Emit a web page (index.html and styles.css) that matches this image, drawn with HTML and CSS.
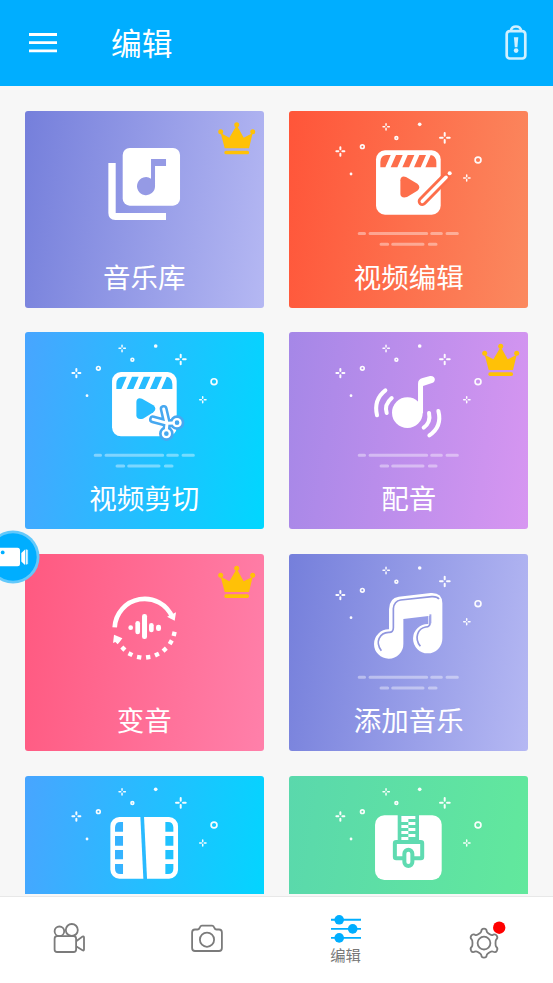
FILE: index.html
```html
<!DOCTYPE html>
<html lang="zh-CN">
<head>
<meta charset="utf-8">
<title>编辑</title>
<link rel="stylesheet" href="styles.css">
</head>
<body>
<svg class="defs" aria-hidden="true">
  <defs>
    <g id="sparks" fill="none" stroke="#fff" stroke-linecap="round" opacity=".96">
      <path stroke-width="6" d="M482 84v8M482 105v8M468 98h8M489 98h8M169 127v6M169 146v6M157 139h6M175 139h6"/>
      <path stroke-width="4.500" d="M306 56v5M306 70v5M297 65h5M311 65h5M548 210v5M548 223v5M539 219h5M553 219h5"/>
      <circle cx="235" cy="125" r="5.500" stroke-width="5"/>
      <circle cx="337" cy="99" r="4.200" stroke-width="5"/>
      <circle cx="582" cy="165" r="8.800" stroke-width="5"/>
      <circle cx="407" cy="58" r="5.500" fill="#fff" stroke="none"/>
      <circle cx="201" cy="207" r="4.200" fill="#fff" stroke="none"/>
    </g>
    <g id="dashes" stroke="#fff" stroke-width="9" stroke-linecap="round" opacity=".4">
      <path d="M225.500 385.500h16M258 385.500h170M443 385.500h29M489 385.500h31M291 418h20M326 418h91M436 418h20"/>
    </g>
    <g id="crown" fill="#ffc107">
      <circle cx="650" cy="59" r="7.500"/><circle cx="602" cy="80" r="7.500"/><circle cx="698" cy="80" r="7.500"/>
      <path d="M602 84L628 98L648 64h4L671 98L698 84L687 130H614Z"/>
      <rect x="613" y="137" width="74" height="11" rx="5"/>
    </g>
    <g id="clapper">
      <rect x="276" y="136" width="194" height="193" rx="27" fill="#fff"/>
      <path fill="currentColor" d="M289 187V171Q290 150 308 150H320L304 187ZM336 150H356L340 187H320ZM371 150H391L375 187H355ZM406 150H426L410 187H390ZM440 150Q457 153 457 173V187H424Z"/>
      <path fill="currentColor" d="M349 226Q350 211 366 216L400 236Q412 246 400 257L369 276Q350 281 349 266Z"/>
    </g>
  </defs>
</svg>
<div class="app">
  <header class="bar">
    <svg class="menu" viewBox="0 0 28 20"><path d="M0 1.500h28M0 9.700h28M0 17.900h28" stroke="#fff" stroke-width="2.800"/></svg>
    <h1>编辑</h1>
    <svg class="battery" viewBox="0 0 22 36" fill="none" stroke="#d0f0ff" stroke-width="2.700"><rect x="1.700" y="6.200" width="18.600" height="27.300" rx="3"/><path d="M6 6c0-6 10-6 10 0"/><path d="M8.900 12.200h4.400l-.9 10h-2.600z" fill="#d0f0ff" stroke="none"/><circle cx="11.100" cy="25.600" r="2.300" fill="#d0f0ff" stroke="none"/></svg>
  </header>

  <main class="grid">
    <section class="card indigo">
      <svg class="art" viewBox="15 18 718 591">
        <rect x="308" y="129" width="172" height="173" rx="21" fill="#fff"/>
        <path d="M393 162H438V183H405V243A27 27 0 1 1 393 221Z" fill="#959ae5"/>
        <path d="M265 174H287V324H438V345H286Q265 344 265 324Z" fill="#fff"/>
        <use href="#crown"/>
      </svg>
      <h2>音乐库</h2>
    </section>

    <section class="card orange">
      <svg class="art" viewBox="15 18 718 591">
        <use href="#sparks"/><use href="#dashes"/><use href="#clapper"/>
        <path d="M415 289L486 217" stroke="currentColor" stroke-width="28" stroke-linecap="round"/>
        <path d="M415 289L486 217" stroke="#fff" stroke-width="11" stroke-linecap="round"/>
        <circle cx="497" cy="205" r="6" fill="#fff"/>
      </svg>
      <h2>视频编辑</h2>
    </section>

    <section class="card blue">
      <svg class="art" viewBox="15 16 718 591">
        <use href="#sparks"/><use href="#dashes"/><use href="#clapper"/>
        <g fill="none" stroke-linecap="round">
          <path d="M431 247L441 290L439 321M399 278L443 290L471 288" stroke="#47a8f0" stroke-width="24"/>
          <circle cx="439" cy="321" r="13" stroke="#47a8f0" stroke-width="18"/><circle cx="471" cy="288" r="13" stroke="#47a8f0" stroke-width="18"/>
          <path d="M431 247L441 290L439 308M399 278L443 290L459 289" stroke="#fff" stroke-width="9"/>
          <circle cx="439" cy="321" r="10.500" stroke="#fff" stroke-width="7"/><circle cx="471" cy="288" r="10.500" stroke="#fff" stroke-width="7"/>
        </g>
      </svg>
      <h2>视频剪切</h2>
    </section>

    <section class="card purple">
      <svg class="art" viewBox="15 16 718 591">
        <use href="#sparks"/><use href="#dashes"/><use href="#crown"/>
        <circle cx="370" cy="258" r="46" fill="#fff"/>
        <path d="M402 260V171Q402 157 416 154L438 148C455 146 457 165 444 169L417 178V260Z" fill="#fff"/>
        <path d="M304 191Q268 219 279 266M323 214Q300 234 308 259M435 259Q441 287 419 303M463 253Q475 300 436 326" fill="none" stroke="#fff" stroke-width="12" stroke-linecap="round"/>
      </svg>
      <h2>配音</h2>
    </section>

    <section class="card pink">
      <svg class="art" viewBox="15 16 718 591">
        <path d="M284 236A90 90 0 0 1 457 206" fill="none" stroke="#fff" stroke-width="14"/>
        <path d="M468 191L464 216L441 204ZM282 258L307 269L301 277L293 287L286 280L279 283Z" fill="#fff"/>
        <g fill="#fff">
          <rect x="456" y="249" width="13" height="13" transform="rotate(13 462 255)"/>
          <rect x="446" y="274" width="13" height="13" transform="rotate(30 452 280)"/>
          <rect x="428" y="296" width="13" height="13" transform="rotate(48 434 302)"/>
          <rect x="405" y="311" width="13" height="13" transform="rotate(65 411 317)"/>
          <rect x="379" y="319" width="13" height="13" transform="rotate(82 385 325)"/>
          <rect x="351" y="319" width="13" height="13" transform="rotate(10 357 325)"/>
          <rect x="325" y="310" width="13" height="13" transform="rotate(26 331 316)"/>
          <rect x="304" y="293" width="13" height="13" transform="rotate(45 310 299)"/>
          <circle cx="332" cy="237" r="7"/>
          <rect x="346" y="217" width="14" height="40" rx="7"/><rect x="366" y="196" width="15" height="75" rx="7"/><rect x="387" y="223" width="14" height="28" rx="7"/><rect x="408" y="228" width="15" height="19" rx="7"/>
        </g>
        <use href="#crown"/>
      </svg>
      <h2>变音</h2>
    </section>

    <section class="card indigo">
      <svg class="art" viewBox="15 16 718 591">
        <use href="#sparks"/><use href="#dashes"/>
        <path d="M315 242V182Q316 147 344 144L440 133Q475 131 475 164V269A44 44 0 1 1 433 226V202L358 211V285A44 44 0 1 1 315 242Z" fill="#fff"/>
        <path d="M292 306C272 280 287 252 314 251Q328 252 328 237V180Q330 157 350 154L443 144Q459 143 465 151M409 293C389 267 402 239 425 235Q439 235 438 220V198" fill="none" stroke="#9096df" stroke-width="5"/>
        <path d="M433 202V194H450V228Q450 237 441 238V202Z" fill="#fff"/>
        <path d="M439 197V224" stroke="#a0a5e8" stroke-width="6"/>
      </svg>
      <h2>添加音乐</h2>
    </section>

    <section class="card blue">
      <svg class="art" viewBox="15 18 718 591">
        <use href="#sparks"/>
        <rect x="271" y="141" width="203" height="185" rx="27" fill="#fff"/>
        <path d="M361 140H372L381 327H370Z" fill="#29baff"/>
        <path fill="#35b3ff" d="M309 156V185H285V172Q286 156 301 156ZM285 198H309V227H285ZM285 240H309V268H285ZM285 282H309V312H301Q285 312 285 296Z"/>
        <path fill="#1fc2ff" d="M436 156V185H460V172Q459 156 444 156ZM436 198H460V227H436ZM436 240H460V268H436ZM436 282H460V296Q460 312 444 312H436Z"/>
      </svg>
    </section>

    <section class="card green">
      <svg class="art" viewBox="15 18 718 591">
        <use href="#sparks"/>
        <rect x="273" y="136" width="200" height="194" rx="28" fill="#fff"/>
        <path d="M341 135H405V211H341Z" fill="currentColor"/>
        <path d="M352 138H373V156H352ZM352 165H373V174H352ZM352 183H373V192H352ZM352 201H373V210H352ZM373 138H394V147H373ZM373 156H394V165H373ZM373 174H394V183H373ZM373 192H394V201H373Z" fill="#fff"/>
        <rect x="332.500" y="216" width="82" height="49" rx="4" fill="#fff" stroke="currentColor" stroke-width="12"/>
        <rect x="361" y="239" width="24" height="49" rx="12" fill="#fff" stroke="currentColor" stroke-width="12"/>
      </svg>
    </section>
  </main>

  <nav class="tabs">
    <a class="tab"><svg class="icon" viewBox="0 0 36 36" fill="none" stroke="#7b7b7b" stroke-width="1.800"><circle cx="8.400" cy="12.300" r="4.800"/><circle cx="20.800" cy="11" r="6"/><rect x="3.600" y="17.200" width="21.500" height="15.800" rx="2.500"/><path d="M25.500 22L31.500 17.500Q33 17 33 18.500V30.500Q33 32 31.500 31.200L25.500 27.500"/></svg></a>
    <a class="tab"><svg class="icon" viewBox="0 0 36 36" fill="none" stroke="#7b7b7b" stroke-width="1.800"><path d="M6 10.500H8.500Q10 10.500 10.600 8.900Q11.300 6.700 12.800 6.700H23.200Q24.700 6.700 25.400 8.900Q26 10.500 27.500 10.500H30Q32.900 10.500 32.900 13.400V29Q32.900 32 30 32H6Q3.100 32 3.100 29V13.400Q3.100 10.500 6 10.500Z"/><circle cx="18" cy="20.700" r="7.100"/></svg></a>
    <a class="tab active"><svg class="sliders" viewBox="0 0 30 28"><path d="M0 4.800h30M0 13.900h30M0 22.900h30" stroke="#00aeff" stroke-width="1.900"/><g fill="#00aeff"><circle cx="8.200" cy="4.800" r="4.800"/><circle cx="21.700" cy="13.900" r="4.800"/><circle cx="8.200" cy="22.900" r="4.800"/></g></svg><span>编辑</span></a>
    <a class="tab"><svg class="gear" viewBox="0 0 44 44" fill="none" stroke="#7b7b7b" stroke-width="1.800" stroke-linejoin="round"><path d="M19.300 11.200Q19.300 8.600 22 8.600Q24.700 8.600 24.700 11.200Q24.800 12.500 28.200 14.500Q29.800 15.600 31.200 14.700Q33.500 13.700 34.800 15.800Q36.200 18.300 34.200 19.600Q33.500 20.500 33.500 23.200Q33.500 25.700 34.200 26.800Q36.200 28.200 34.900 30.700Q33.700 32.800 31.200 31.700Q29.800 31.100 28.200 32Q24.800 34 24.700 35.200Q24.500 37.700 22 37.700Q19.500 37.700 19.300 35.200Q19.200 34 15.800 32Q14.200 31.100 12.800 31.700Q10.300 32.800 9.100 30.700Q7.800 28.200 9.800 26.800Q10.500 25.700 10.500 23.200Q10.500 20.500 9.800 19.600Q7.800 18.300 9.200 15.800Q10.500 13.700 12.800 14.700Q14.200 15.600 15.800 14.500Q19.200 12.500 19.300 11.200Z"/><circle cx="22" cy="23.100" r="6.400"/><circle cx="37.200" cy="7.700" r="6.200" fill="red" stroke="none"/></svg></a>
  </nav>

  <button class="record" aria-label="录制">
    <svg viewBox="0 0 54 54"><circle cx="27" cy="27" r="26.500" fill="#63c9fb"/><circle cx="27" cy="27" r="23.700" fill="#00aeff"/><rect x="12" y="17.800" width="22" height="18.500" rx="2.500" fill="#fff"/><path d="M35.300 23L39 19.500V35L35.300 31.500Z" fill="#fff"/><path d="M40.300 19.500V34.500" stroke="#dff5ff" stroke-width="1.400"/><path d="M41.600 19.800V34.200" stroke="#bdeaff" stroke-width="1"/><circle cx="16.700" cy="22.400" r="1.900" fill="#00aeff"/></svg>
  </button>
</div>
</body>
</html>
```
FILE: styles.css
```css
* { box-sizing: border-box; }

body {
  margin: 0;
  font-family: "Noto Sans CJK SC", sans-serif;
  background: #f7f7f7;
}

svg { display: block; }
h1, h2 { margin: 0; font-weight: 400; color: #fff; }

.defs { display: none; }

.app {
  position: relative;
  display: flex;
  flex-direction: column;
  width: 553px;
  height: 983px;
  overflow: hidden;
}

.bar {
  display: flex;
  align-items: center;
  flex: 0 0 86px;
  padding: 0 26px 0 29px;
  background: #00aeff;
}
.menu { width: 28px; height: 20px; }
.bar h1 {
  flex: 1;
  margin-left: 54px;
  padding-bottom: 2px;
  font-size: 30.7px;
  line-height: 44px;
}
.battery { width: 22px; height: 36px; }

.grid {
  flex: 0 0 808px;
  display: grid;
  grid-template-columns: 239.4px 239.4px;
  grid-auto-rows: 197px;
  gap: 24.8px 25px;
  padding: 24.6px;
  overflow: hidden;
}

.card {
  display: grid;
  border-radius: 3px;
}
.card > * { grid-area: 1 / 1; }
.card h2 {
  align-self: end;
  margin-bottom: 12px;
  font-size: 27.5px;
  line-height: 40px;
  text-align: center;
}
.art { width: 100%; height: 100%; }

.indigo { background: linear-gradient(98deg, #757fdb, #b5b8f3); }
.orange { background: linear-gradient(98deg, #ff5539, #fb895f); color: #fd6e4b; }
.blue { background: linear-gradient(98deg, #48a5ff, #00d7ff); color: #27bcff; }
.purple { background: linear-gradient(98deg, #a587e7, #d796f1); }
.pink { background: linear-gradient(98deg, #ff5980, #ff80aa); }
.green { background: linear-gradient(98deg, #5ad8ac, #62e99c); color: #5fdbb1; }

.tabs {
  display: grid;
  grid-template-columns: repeat(4, 1fr);
  flex: 0 0 87px;
  margin-top: 2px;
  border-top: 1px solid #e8e8e8;
  background: #fff;
}
.tab {
  display: flex;
  flex-direction: column;
  align-items: center;
  justify-content: center;
}
.icon { width: 36px; height: 36px; margin-bottom: 6px; }
.sliders { width: 30px; height: 28px; }
.active { justify-content: flex-start; padding-top: 18px; }
.active span {
  font-size: 15.3px;
  line-height: 22px;
  color: #777;
}
.gear { width: 44px; height: 44px; margin-top: 4px; }

.record {
  position: absolute;
  left: -14px;
  top: 530px;
  width: 54px;
  height: 54px;
  padding: 0;
  border: 0;
  background: none;
}
```
